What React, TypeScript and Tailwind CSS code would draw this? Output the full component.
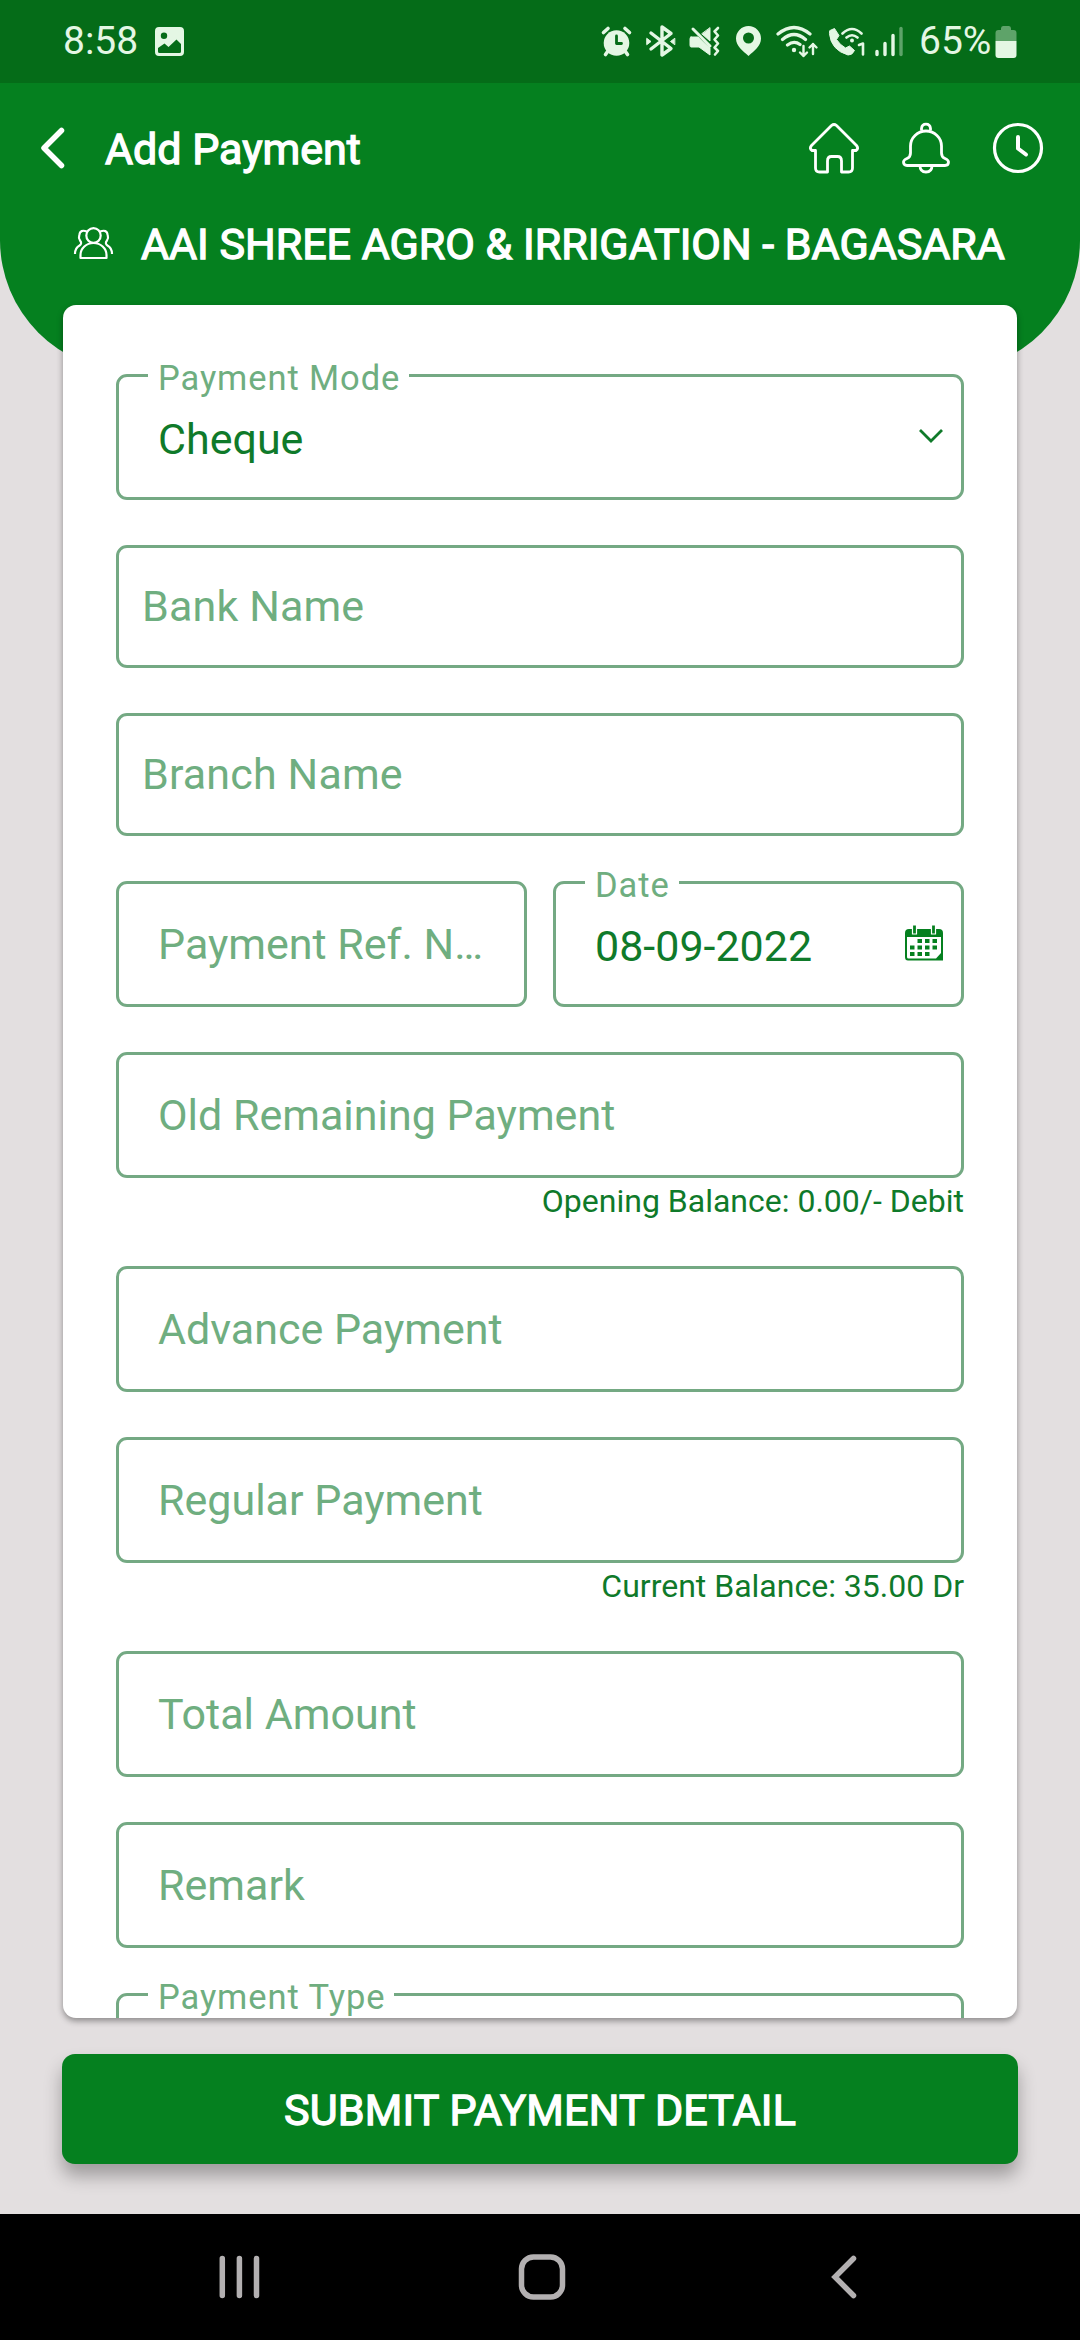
import type { ReactNode } from "react";

type FieldProps = {
  label: string;
  value?: string;
  icon?: ReactNode;
};

function StatusBar() {
  return (
    <div className="flex h-[83px] items-center bg-[#056c18] text-[39px] leading-none text-[#e4f7e4]">
      <span className="ml-[63px] w-[92px]">8:58</span>
      <svg width="29" height="29" viewBox="0 0 29 29" fill="currentColor">
        <path
          fillRule="evenodd"
          d="M4 0H25A4 4 0 0 1 29 4V25A4 4 0 0 1 25 29H4A4 4 0 0 1 0 25V4A4 4 0 0 1 4 0ZM3 21V24.5Q3 26 4.500 26H24.500Q26 26 26 24.500V17L21.500 12.500L13.500 20L9.500 16.500ZM9 5.500A3.200 3.200 0 1 0 9 11.900A3.200 3.200 0 1 0 9 5.500Z"
        />
      </svg>

      <StatusIcons />

      <span className="ml-[14px] w-[76px]">65%</span>
      <svg width="22" height="34" viewBox="0 0 22 34" fill="currentColor">
        <path
          opacity="0.4"
          d="M6 3.500Q6 1 8 1H14Q16 1 16 3.500V5H18.500Q21.500 5 21.500 8V16H.5V8Q.5 5 3.500 5H6Z"
        />
        <path d="M.5 16H21.500V30Q21.500 33 18.500 33H3.500Q.5 33 .5 30Z" />
      </svg>
    </div>
  );
}

/* alarm, bluetooth, mute/vibrate, location, wifi, wifi calling, signal */
function StatusIcons() {
  return (
    <svg
      className="ml-[414px]"
      width="307"
      height="36"
      viewBox="598 24 307 36"
      fill="none"
      stroke="currentColor"
      strokeLinecap="round"
      strokeLinejoin="round"
    >
      <g>
        <circle cx="616.500" cy="43" r="12.800" fill="currentColor" stroke="none" />
        <path
          d="M603.500 32.500L608 28.500M629.500 32.500L625 28.500"
          strokeWidth="3.600"
        />
        <path d="M608 51L605.500 54.500M625 51L627.500 54.500" strokeWidth="3.600" />
        <path d="M616.500 36V43.500H621.500" stroke="#056c18" strokeWidth="2.800" />
      </g>
      <path
        d="M651 33L671 48.500L662 55V27L671 33.500L651 49"
        strokeWidth="3.400"
      />
      <path
        d="M647 38.500L651 41.500L647 44.500ZM674.500 38.500L670.500 41.500L674.500 44.500Z"
        fill="currentColor"
        strokeWidth="1"
      />
      <path
        d="M691 37H698L710 48V55L699 47H691Q690 47 690 45V39Q690 37 691 37ZM710 28V41L702 34Z"
        fill="currentColor"
        strokeWidth="1"
      />
      <path d="M693 29L710 46" strokeWidth="3" />
      <path
        d="M718 28L714.500 31.500L718 35.500L714.500 39.500L718 43.500L714.500 47.500L718 51L715 54.500"
        strokeWidth="2.600"
      />
      <path
        fillRule="evenodd"
        fill="currentColor"
        stroke="none"
        d="M748.500 26A12.500 12.500 0 0 1 761 38.500C761 46 754 51 748.500 56C743 51 736 46 736 38.500A12.500 12.500 0 0 1 748.500 26ZM748.500 32.500A5.500 5.500 0 1 0 748.500 43.500A5.500 5.500 0 1 0 748.500 32.500Z"
      />
      <path
        d="M778 34Q794 21 810 34M782.500 39.500Q794 29.500 805.500 39.500M787.500 45Q794 40 800 44.500"
        strokeWidth="3.200"
      />
      <circle cx="794" cy="50" r="2.200" fill="currentColor" stroke="none" />
      <path
        d="M803.500 46V56M800 52.500L803.500 56L807 52.500M813 54V44M809.500 47.500L813 44L816.500 47.500"
        strokeWidth="2.400"
      />
      <path
        d="M830 30.500L834.500 28.500L839 35.500L836.500 39.500Q840 45 845.500 48L849.500 46L854.500 50.500Q852 55.500 848 55Q831 50 829.500 34Z"
        fill="currentColor"
        strokeWidth="1"
      />
      <path
        d="M842.500 33.500Q852 24.500 861.500 33.500M846.500 37.500Q852 33 857.500 37.500"
        strokeWidth="2.600"
      />
      <circle cx="852" cy="40.500" r="2" fill="currentColor" stroke="none" />
      <path d="M859 45L863 43.500V54.500" strokeWidth="2.600" />
      <path d="M877 51.500V54.500M885 43.500V54.500M893 35.500V54.500" strokeWidth="3.400" />
      <path d="M901 28.500V54.500" strokeWidth="3.400" opacity="0.4" />
    </svg>
  );
}

function Header() {
  return (
    <header className="h-[288px] rounded-b-[131px] bg-[#05801f] text-white">
      <div className="flex h-[130px] items-center">
        <svg
          className="ml-[40px]"
          width="26"
          height="44"
          viewBox="0 0 26 44"
          fill="none"
          stroke="currentColor"
          strokeWidth="5.500"
          strokeLinecap="round"
          strokeLinejoin="round"
        >
          <path d="M21.500 4.500L4 22L21.500 39.500" />
        </svg>
        <h1 className="ml-[39px] flex-1 pt-[3px] text-[43px] leading-none font-normal [-webkit-text-stroke:1.300px_white]">
          Add Payment
        </h1>
        <svg
          width="52"
          height="52"
          viewBox="0 0 52 52"
          fill="none"
          stroke="currentColor"
          strokeWidth="2.800"
          strokeLinejoin="round"
        >
          <path d="M23.500 3.500Q26 1.500 28.500 3.500L48.500 23.500Q51 26.500 48 28.500H44.500V46Q44.500 50 40.500 50H33.500V39Q33.500 34.500 29.500 34.500H23.500Q19.500 34.500 19.500 39V50H11.500Q7.500 50 7.500 46V28.500H4Q1 26.500 3.500 23.500Z" />
        </svg>
        <svg
          className="ml-[42px]"
          width="48"
          height="52"
          viewBox="0 0 48 52"
          fill="none"
          stroke="currentColor"
          strokeWidth="2.800"
          strokeLinejoin="round"
        >
          <path d="M8.500 24A15.500 15 0 0 1 39.500 24V31Q39.500 35 43 36.500Q46.500 38 46.500 40Q46.500 43.500 43 43.500H5Q1.500 43.500 1.500 40Q1.500 38 5 36.500Q8.500 35 8.500 31Z" />
          <path d="M19.500 8.500V6.500Q20 2.200 24 2.200Q28 2.200 28.500 6.500V8.500M18 43.500Q18 50 24 50Q30 50 30 43.500" />
        </svg>
        <svg
          className="mr-[36px] ml-[42px]"
          width="52"
          height="52"
          viewBox="0 0 52 52"
          fill="none"
          stroke="currentColor"
          strokeLinecap="round"
          strokeLinejoin="round"
        >
          <circle cx="26" cy="26" r="23.500" strokeWidth="3.200" />
          <path d="M26 15V26.500L34 32.500" strokeWidth="4" />
        </svg>
      </div>

      <div className="flex h-[62px] items-center">
        <svg
          className="ml-[73px]"
          width="41"
          height="34"
          viewBox="0 0 41 34"
          fill="none"
          stroke="currentColor"
          strokeWidth="2.200"
          strokeLinejoin="round"
        >
          <ellipse cx="20.500" cy="8.500" rx="7.200" ry="7.400" />
          <path d="M7.500 31V28A13 12 0 0 1 33.500 28V31Z" />
          <path d="M14 4.500Q7 2 6.300 8Q5.300 11 7 13.500Q9.500 16.500 6.500 18.500Q2 21 2 27M27 4.500Q34 2 34.700 8Q35.700 11 34 13.500Q31.500 16.500 34.500 18.500Q39 21 39 27" />
        </svg>
        <h2 className="ml-[27px] pt-[1px] text-[43px] leading-none font-normal whitespace-nowrap [-webkit-text-stroke:1.300px_white]">
          AAI SHREE AGRO &amp; IRRIGATION - BAGASARA
        </h2>
      </div>
    </header>
  );
}

/* Outlined field: the label moves up into the border once a value is given. */
function Field({ label, value, icon }: FieldProps) {
  return (
    <div className="relative flex h-[126px] min-w-0 items-center rounded-[11px] border-3 border-[#74a983] pr-[18px] pl-[39px] text-[43px] leading-[56px]">
      {value !== undefined ? (
        <>
          <span className="absolute -top-[19px] left-[29px] bg-white pr-[9px] pl-[10px] text-[34.500px] leading-[40px] tracking-[0.9px] text-[#6fae80]">
            {label}
          </span>
          <span className="flex-1 pt-[3px] text-[#0f7a2a]">{value}</span>
          {icon}
        </>
      ) : (
        <span className="whitespace-nowrap text-[#6fae80]">{label}</span>
      )}
    </div>
  );
}

function PlainField({ label }: FieldProps) {
  return (
    <div className="flex h-[123px] items-center rounded-[11px] border-3 border-[#74a983] pb-[2px] pl-[23px] text-[43px] leading-[56px] tracking-[0.15px] text-[#6fae80]">
      {label}
    </div>
  );
}

function BalanceNote({ text }: { text: string }) {
  return (
    <p className="-mt-[45px] h-[43px] pt-[3px] text-right text-[32px] leading-[40px] text-[#0f7a2a]">
      {text}
    </p>
  );
}

function ChevronDown() {
  return (
    <svg
      className="mb-[2px]"
      width="24"
      height="14"
      viewBox="0 0 24 14"
      fill="none"
      stroke="#0f7a2a"
      strokeWidth="2.800"
    >
      <path d="M1 1L12 12L23 1" />
    </svg>
  );
}

function CalendarIcon() {
  return (
    <svg
      className="mb-[2px]"
      width="38"
      height="36"
      viewBox="0 0 38 36"
      fill="#05801f"
    >
      <path
        fillRule="evenodd"
        d="M4 4H34Q38 4 38 8V35.500H3Q0 35.500 0 32V8Q0 4 4 4ZM2 12V32Q2 33.500 3.500 33.500H31L36 28V12Z"
      />
      <path
        d="M7.500 0H11.500V9H7.500ZM26.500 0H30.500V9H26.500Z"
        stroke="white"
        strokeWidth="1.200"
      />
      <path d="M12.500 14H17V18H12.500ZM20 14H24.500V18H20ZM27.500 14H32V18H27.500ZM5 20.500H9.500V24.500H5ZM12.500 20.500H17V24.500H12.500ZM20 20.500H24.500V24.500H20ZM27.500 20.500H32V24.500H27.500ZM5 27H9.500V31H5ZM12.500 27H17V31H12.500ZM20 27H24.500V31H20Z" />
    </svg>
  );
}

function PaymentForm() {
  return (
    <main className="mx-[63px] -mt-[66px] h-[1713px] shrink-0 overflow-hidden rounded-[13px] bg-white px-[53px] pt-[69px] shadow-[0_3px_6px_rgba(0,0,0,0.38)]">
      <div className="flex flex-col gap-[45px]">
        <Field label="Payment Mode" value="Cheque" icon={<ChevronDown />} />
        <PlainField label="Bank Name" />
        <PlainField label="Branch Name" />
        <div className="grid grid-cols-2 gap-[26px]">
          <Field label="Payment Ref. N…" />
          <Field label="Date" value="08-09-2022" icon={<CalendarIcon />} />
        </div>
        <Field label="Old Remaining Payment" />
        <BalanceNote text="Opening Balance: 0.00/- Debit" />
        <Field label="Advance Payment" />
        <Field label="Regular Payment" />
        <BalanceNote text="Current Balance: 35.00 Dr" />
        <Field label="Total Amount" />
        <Field label="Remark" />
        <Field label="Payment Type" value="" />
      </div>
    </main>
  );
}

function NavigationBar() {
  return (
    <nav className="mt-auto flex h-[126px] items-center bg-black text-[#b3b0b1]">
      <svg
        className="ml-[218px]"
        width="42"
        height="44"
        viewBox="0 0 42 44"
        stroke="currentColor"
        strokeWidth="5.500"
        strokeLinecap="round"
      >
        <path d="M4.300 3.500V40.500M21.400 3.500V40.500M38.500 3.500V40.500" />
      </svg>
      <svg
        className="ml-[258px]"
        width="48"
        height="46"
        viewBox="0 0 48 46"
        fill="none"
        stroke="currentColor"
        strokeWidth="5.500"
      >
        <rect x="3.500" y="3" width="41" height="40" rx="12" />
      </svg>
      <svg
        className="ml-[264px]"
        width="28"
        height="44"
        viewBox="0 0 28 44"
        fill="none"
        stroke="currentColor"
        strokeWidth="5.500"
        strokeLinecap="round"
      >
        <path d="M23.500 3.500L5 22L23.500 40.500" />
      </svg>
    </nav>
  );
}

export default function App() {
  return (
    <div className="flex h-[2340px] w-[1080px] flex-col overflow-hidden bg-[#e3dfe0] font-[Roboto,sans-serif]">
      <StatusBar />
      <Header />
      <PaymentForm />
      <button
        type="button"
        className="mx-[62px] mt-[36px] h-[110px] shrink-0 rounded-[13px] bg-[#05801f] pt-[2px] text-[43px] leading-none font-normal tracking-[0.2px] text-white shadow-[0_12px_18px_rgba(0,0,0,0.3)] [-webkit-text-stroke:1.300px_white]"
      >
        SUBMIT PAYMENT DETAIL
      </button>
      <NavigationBar />
    </div>
  );
}
